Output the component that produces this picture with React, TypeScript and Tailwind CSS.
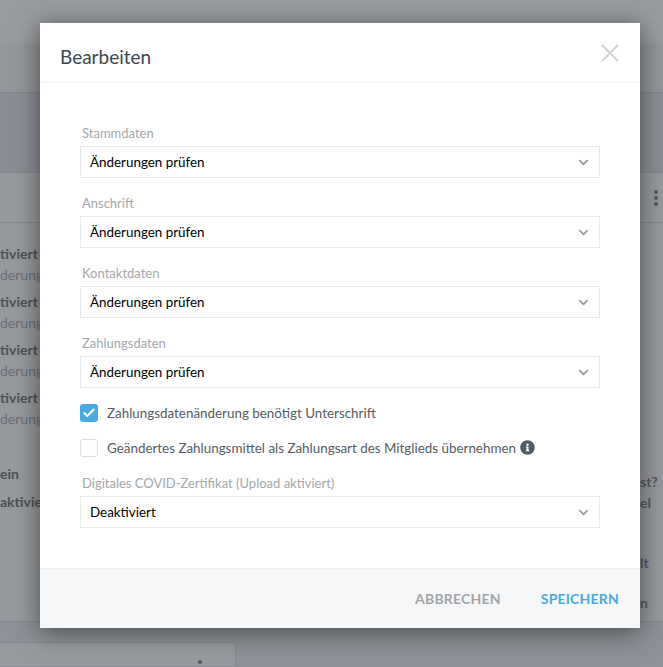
import { Check, X } from 'lucide-react';
import { FaChevronDown, FaInfoCircle } from 'react-icons/fa';

const font = { fontFamily: 'Lato, "Noto Sans", sans-serif' };

function SelectField({ label, value }: { label: string; value: string }) {
  return (
    <div className="flex flex-col">
      <label className="h-[25px] pl-[2px] text-[13px] leading-[24px] text-[#a5a8ab]">{label}</label>
      <div className="flex h-[32px] items-center justify-between border border-[#e9eaeb] pl-[9px] pr-[10px] text-[13.4px] text-black">
        <span>{value}</span>
        <FaChevronDown className="size-[11px] text-[#9a9da0]" />
      </div>
    </div>
  );
}

function BackgroundRow({ title, sub }: { title: string; sub: string }) {
  return (
    <div className="flex h-[48px] flex-col whitespace-nowrap text-[14px]">
      <span className="font-bold leading-[21px] text-[#4d5156]">{title}</span>
      <span className="leading-[21px] text-[#6c7075]">{sub}</span>
    </div>
  );
}

export default function App() {
  return (
    <div className="relative h-[667px] w-[663px] overflow-hidden bg-[#8e9197]" style={font}>
      {/* Page behind the dialog */}
      <div className="h-[43px] bg-[#989b9f]" />
      <div className="h-[50px] border-b border-[#84878c] bg-[#93969a]" />
      <div className="h-[80px] border-b border-[#84878c] bg-[#8b8e94]" />
      <div className="flex h-[50px] items-center justify-end border-b border-[#84878c] bg-[#96999d] pr-[5px]">
        <div className="flex flex-col gap-[2px]">
          <span className="size-[4px] rounded-full bg-[#55585e]" />
          <span className="size-[4px] rounded-full bg-[#55585e]" />
          <span className="size-[4px] rounded-full bg-[#55585e]" />
        </div>
      </div>
      <div className="flex h-[399px] justify-between border-b border-[#84878c] bg-[#96999d]">
        <div className="pt-[20px]">
          <BackgroundRow title="tiviert" sub="derung" />
          <BackgroundRow title="tiviert" sub="derung" />
          <BackgroundRow title="tiviert" sub="derung" />
          <BackgroundRow title="tiviert" sub="derung" />
          <div className="mt-[25px] text-[14px] font-bold leading-[28px] text-[#4d5156]">ein</div>
          <div className="text-[14px] font-bold leading-[28px] text-[#4d5156]">aktiviert</div>
        </div>
        <div className="flex w-[23px] flex-col items-start whitespace-nowrap pt-[248px] text-[14px] font-bold leading-[21px] text-[#55585e]">
          <span>st?</span>
          <span>el</span>
          <span className="mt-[39px]">lt</span>
          <span className="mt-[19px]">n</span>
        </div>
      </div>
      <div className="h-[20px]" />
      <div className="relative h-[24px] w-[236px] border-t border-r border-[#84878c] bg-[#96999d]">
        <span className="absolute right-[33px] top-[17px] size-[4px] rounded-full bg-[#55585e]" />
      </div>

      {/* Dialog */}
      <div className="absolute left-[40px] top-[23px] flex h-[605px] w-[600px] flex-col bg-white shadow-[0_4px_24px_rgba(0,0,0,0.5)]">
        <div className="flex h-[60px] shrink-0 items-center justify-between border-b border-[#eff0f1] pl-[20px] pr-[15px]">
          <h2 className="mt-[9px] text-[19px] text-[#3d4750]">Bearbeiten</h2>
          <X className="size-[30px] text-[#d2d3d4]" strokeWidth={1.6} />
        </div>
        <div className="flex flex-1 flex-col px-[40px] pt-[38px]">
          <div className="flex flex-col gap-[13px]">
            <SelectField label="Stammdaten" value="Änderungen prüfen" />
            <SelectField label="Anschrift" value="Änderungen prüfen" />
            <SelectField label="Kontaktdaten" value="Änderungen prüfen" />
            <SelectField label="Zahlungsdaten" value="Änderungen prüfen" />
          </div>
          <label className="mt-[15px] flex h-[20px] items-center gap-[9px] text-[13.4px] text-[#555c63]">
            <span className="flex size-[18px] items-center justify-center rounded-[3px] bg-[#4aaae0]">
              <Check className="size-[14px] text-white" strokeWidth={3.5} />
            </span>
            Zahlungsdatenänderung benötigt Unterschrift
          </label>
          <label className="mt-[15px] flex h-[20px] items-center gap-[9px] text-[13.4px] text-[#555c63]">
            <span className="size-[18px] rounded-[3px] border border-[#dcdddf]" />
            Geändertes Zahlungsmittel als Zahlungsart des Mitglieds übernehmen
            <FaInfoCircle className="-ml-[5px] -mt-[2px] size-[15px] text-[#4f5b65]" />
          </label>
          <div className="mt-[13px]">
            <SelectField label="Digitales COVID-Zertifikat (Upload aktiviert)" value="Deaktiviert" />
          </div>
        </div>
        <div className="flex h-[60px] shrink-0 items-center justify-end gap-[40px] border-t border-[#eff0f1] bg-[#f6f7f9] pr-[21px] text-[14px] font-bold tracking-[0.2px]">
          <span className="text-[#a3a5a8]">ABBRECHEN</span>
          <span className="text-[#4aaae0]">SPEICHERN</span>
        </div>
      </div>
    </div>
  );
}
